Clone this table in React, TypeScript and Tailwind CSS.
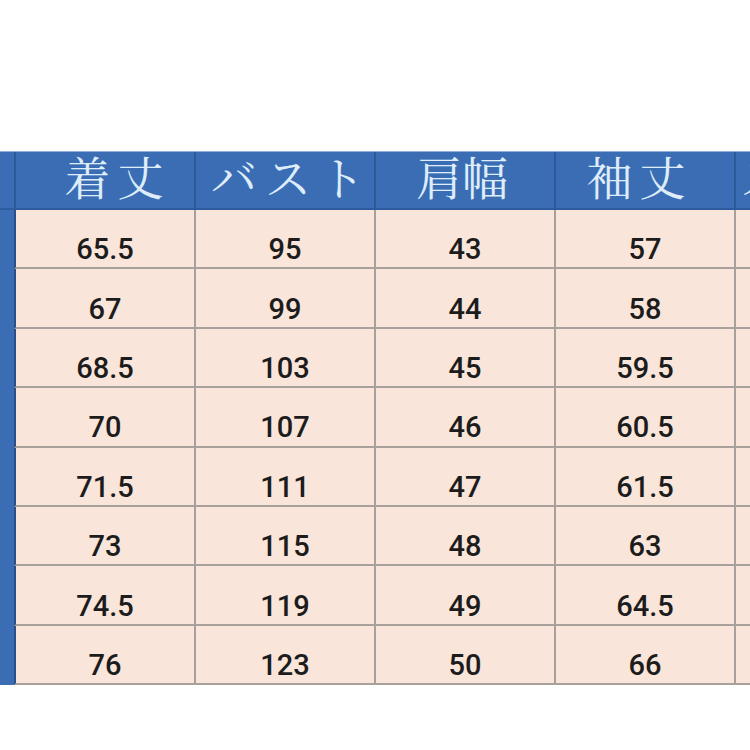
const headers = [
  { label: "着丈", track: "tracking-[7px] pl-[25px]" },
  { label: "バスト", track: "tracking-[8px] pl-[14px]" },
  { label: "肩幅", track: "tracking-[0px] pr-[6px]" },
  { label: "袖丈", track: "tracking-[7px] pr-[11px]" },
];

const rows = [
  ["65.5", "95", "43", "57"],
  ["67", "99", "44", "58"],
  ["68.5", "103", "45", "59.5"],
  ["70", "107", "46", "60.5"],
  ["71.5", "111", "47", "61.5"],
  ["73", "115", "48", "63"],
  ["74.5", "119", "49", "64.5"],
  ["76", "123", "50", "66"],
];

const cols = "grid grid-cols-[14px_180px_180px_180px_180px_16px]";
const jp = "font-['Noto_Serif_CJK_JP','Noto_Sans_CJK_JP',serif]";

export default function App() {
  return (
    <div className="h-[750px] w-[750px] overflow-hidden bg-white pt-[151px]">
      <div className="border-t border-[#8fb0da]">
        {/* header */}
        <div className={`${cols} h-[58px] overflow-hidden border-b-2 border-[#2d5c9e] bg-[#3b6db5]`}>
          <div />
          {headers.map((h) => (
            <div
              key={h.label}
              className={`flex items-center justify-center whitespace-nowrap border-l-2 border-[#2c5a98] pb-[38px] text-[46px] leading-none text-[#deedf9] ${jp} ${h.track}`}
            >
              {h.label}
            </div>
          ))}
          <div className={`flex items-center overflow-hidden whitespace-nowrap border-l-2 border-[#2c5a98] pb-[38px] pl-[4px] text-[46px] leading-none text-[#deedf9] ${jp}`}>
            スソ周り
          </div>
        </div>

        {/* body */}
        {rows.map((r, i) => (
          <div key={i} className={`${cols} h-[59.4px]`}>
            <div className="bg-[#3b6db5]" />
            {r.map((v, j) => (
              <div
                key={j}
                className={`flex items-center justify-center border-b-2 border-l-2 border-[#a7a09b] bg-[#f9e5d9] pt-[22px] font-['Roboto','Liberation_Sans',sans-serif] text-[29px] font-medium leading-none text-[#1c1c1c] ${j === 0 ? "border-l-[#2b4f88]" : ""}`}
              >
                {v}
              </div>
            ))}
            <div className="border-b-2 border-l-2 border-[#a7a09b] bg-[#f9e5d9]" />
          </div>
        ))}
      </div>
    </div>
  );
}
